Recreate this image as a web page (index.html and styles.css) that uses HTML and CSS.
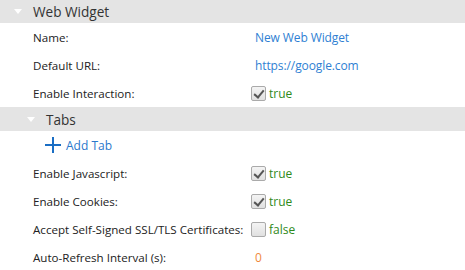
FILE: index.html
```html
<!DOCTYPE html>
<html lang="en">
<head>
  <meta charset="UTF-8">
  <title>Web Widget</title>
  <link rel="stylesheet" href="styles.css">
</head>
<body>

  <div class="panel">
    <div class="section-head top">
      <span class="caret"></span>
      <span class="section-title">Web Widget</span>
    </div>

    <div class="row">
      <span class="label">Name:</span>
      <span class="value link">New Web Widget</span>
    </div>
    <div class="row">
      <span class="label">Default URL:</span>
      <span class="value link">https://google.com</span>
    </div>
    <div class="row">
      <span class="label">Enable Interaction:</span>
      <span class="value"><span class="check on"></span><span class="bool">true</span></span>
    </div>

    <div class="section-head nested">
      <span class="caret"></span>
      <span class="section-title">Tabs</span>
    </div>
    <div class="row add-row">
      <span class="plus"></span>
      <span class="add-text">Add Tab</span>
    </div>

    <div class="row">
      <span class="label">Enable Javascript:</span>
      <span class="value"><span class="check on"></span><span class="bool">true</span></span>
    </div>
    <div class="row">
      <span class="label">Enable Cookies:</span>
      <span class="value"><span class="check on"></span><span class="bool">true</span></span>
    </div>
    <div class="row">
      <span class="label">Accept Self-Signed SSL/TLS Certificates:</span>
      <span class="value"><span class="check"></span><span class="bool">false</span></span>
    </div>
    <div class="row">
      <span class="label">Auto-Refresh Interval (s):</span>
      <span class="value num">0</span>
    </div>
  </div>

</body>
</html>
```

FILE: styles.css
```css
/* Base */
* { box-sizing: border-box; margin: 0; padding: 0; }
body {
  background: #fff;
  font-family: 'Open Sans', sans-serif;
  color: #222;
  overflow: hidden;
}

/* Section headers */
.section-head {
  display: flex;
  align-items: center;
  height: 24px;
  background: #e4e4e4;
  color: #333;
  font-size: 13.6px;
}
.section-head.top {
  height: 23px;
  padding-left: 14px;
}
.section-head.nested {
  padding-left: 27px;
}
.caret {
  width: 0;
  height: 0;
  border-left: 4px solid transparent;
  border-right: 4px solid transparent;
  border-top: 5px solid #fff;
  margin-right: 11px;
}

/* Rows */
.row {
  display: flex;
  align-items: center;
  height: 28px;
  padding-left: 33px;
  font-size: 11.6px;
}
.label {
  width: 218px;
  flex-shrink: 0;
  white-space: nowrap;
}
.value {
  display: flex;
  align-items: center;
  font-size: 12px;
}
.value.link { color: #2f7fd3; padding-left: 4px; letter-spacing: -0.1px; }
.value.num { color: #f0883c; padding-left: 4px; }
.bool { color: #2f8a1a; margin-left: 3px; }

/* Checkbox */
.check {
  position: relative;
  width: 15px;
  height: 15px;
  border: 1px solid #aaa;
  border-radius: 2px;
  background: linear-gradient(#f4f4f4, #e0e0e0);
}
.check.on::after {
  content: "";
  position: absolute;
  left: 4px;
  top: 1px;
  width: 4px;
  height: 8px;
  border-right: 2px solid #555;
  border-bottom: 2px solid #555;
  transform: rotate(40deg);
}

/* Add tab */
.add-row { padding-left: 45px; }
.plus {
  position: relative;
  width: 16px;
  height: 16px;
  margin-right: 5px;
}
.plus::before, .plus::after {
  content: "";
  position: absolute;
  background: #1a6ec4;
}
.plus::before { left: 0; top: 7px; width: 16px; height: 2px; }
.plus::after { left: 7px; top: 0; width: 2px; height: 16px; }
.add-text { color: #2a78cc; font-size: 12px; }
```
